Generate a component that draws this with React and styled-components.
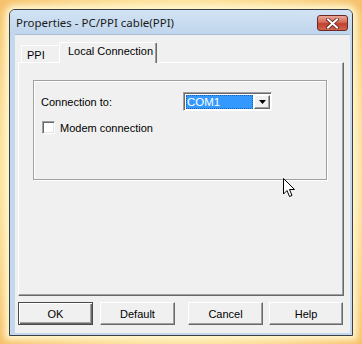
import React from "react";
import styled, { createGlobalStyle } from "styled-components";

const GlobalStyle = createGlobalStyle`
  html, body {
    margin: 0;
    padding: 0;
    width: 362px;
    height: 344px;
    overflow: hidden;
    background: radial-gradient(ellipse at 50% 50%, #fff3c4 0%, #fde4a0 68%, #f6c06a 100%);
  }
  * { box-sizing: border-box; }
`;

const Stage = styled.div`
  position: relative;
  width: 362px;
  height: 344px;
  padding: 9px 0 0 9px;
`;

const Window = styled.div`
  width: 344px;
  height: 327px;
  border: 1px solid #3a3f47;
  border-radius: 6px 6px 0 0;
  background: #c3d8ed;
  display: flex;
  flex-direction: column;
  box-shadow: 0 0 6px 4px #fff6cf;
`;

const TitleBar = styled.div`
  height: 24px;
  display: flex;
  align-items: center;
  justify-content: space-between;
  padding: 0 4px 0 6px;
  border-radius: 5px 5px 0 0;
  background: linear-gradient(#d2e3f4, #c0d6ec);
`;

const Title = styled.span`
  font-family: "Noto Sans", "DejaVu Sans", sans-serif;
  font-size: 11.5px;
  color: #1a1a1a;
  margin-top: 1px;
`;

const CloseButton = styled.div`
  width: 31px;
  height: 16px;
  border: 1px solid #6b2a22;
  border-radius: 3px;
  background: linear-gradient(#e9a79a 0%, #d46a58 45%, #c1402e 55%, #d0654f 100%);
  display: flex;
  align-items: center;
  justify-content: center;
  margin-top: 2px;
`;

const Client = styled.div`
  flex: 1;
  margin: 0 2px 2px 5px;
  background: #f0f0f0;
  border-top: 1px solid #a9bdd3;
  padding: 7px 6px 0 3px;
  display: flex;
  flex-direction: column;
`;

const TabStrip = styled.div`
  height: 20px;
  display: flex;
  align-items: flex-end;
  padding-left: 3px;
  position: relative;
  z-index: 1;
`;

const Tab = styled.div`
  font-family: "Liberation Sans", Arial, sans-serif;
  font-size: 11px;
  line-height: 13px;
  white-space: nowrap;
  color: #000;
  background: #f0f0f0;
  border-top: 1px solid #ffffff;
  border-left: 1px solid #ffffff;
  border-right: 1px solid #696969;
  box-shadow: inset -1px 0 0 #a0a0a0;
  border-radius: 2px 2px 0 0;
  height: ${({ $active }) => ($active ? "21px" : "17px")};
  margin-bottom: ${({ $active }) => ($active ? "-1px" : "0")};
  margin-left: ${({ $active }) => ($active ? "-2px" : "0")};
  padding: ${({ $active }) => ($active ? "2px 0 0 8px" : "3px 0 0 5px")};
  width: ${({ $w }) => $w}px;
`;

const Panel = styled.div`
  height: 234px;
  border-top: 1px solid #ffffff;
  border-left: 1px solid #ffffff;
  border-right: 1px solid #696969;
  border-bottom: 1px solid #696969;
  box-shadow: inset -1px -1px 0 #a0a0a0;
  padding: 17px 0 0 14px;
`;

const GroupBox = styled.div`
  width: 294px;
  height: 100px;
  border: 1px solid #a0a0a0;
  box-shadow: 1px 1px 0 #ffffff, inset 1px 1px 0 #ffffff;
  padding: 11px 0 0 7px;
  display: flex;
  flex-direction: column;
  gap: 7px;
`;

const Row = styled.div`
  display: flex;
  align-items: center;
  height: 19px;
`;

const Label = styled.span`
  font-family: "Liberation Sans", Arial, sans-serif;
  font-size: 11px;
  color: #000;
  width: ${({ $w }) => ($w ? `${$w}px` : "auto")};
`;

const Combo = styled.div`
  width: 89px;
  height: 19px;
  border-top: 1px solid #a0a0a0;
  border-left: 1px solid #a0a0a0;
  border-right: 1px solid #ffffff;
  border-bottom: 1px solid #ffffff;
  box-shadow: inset 1px 1px 0 #696969;
  background: #ffffff;
  display: flex;
  padding: 2px 1px 1px 2px;
`;

const ComboValue = styled.div`
  flex: 1;
  background: #3399ff;
  color: #ffffff;
  font-family: "Liberation Sans", Arial, sans-serif;
  font-size: 11.5px;
  line-height: 14px;
  padding-left: 1px;
  outline: 1px dotted #1f5fa8;
  outline-offset: -1px;
`;

const ComboArrow = styled.div`
  width: 16px;
  margin-left: 1px;
  background: #f0f0f0;
  border-top: 1px solid #ffffff;
  border-left: 1px solid #ffffff;
  border-right: 1px solid #696969;
  border-bottom: 1px solid #696969;
  box-shadow: inset -1px -1px 0 #a0a0a0;
  display: flex;
  align-items: center;
  justify-content: center;
`;

const CheckBox = styled.span`
  width: 13px;
  height: 13px;
  background: #ffffff;
  border-top: 1px solid #a0a0a0;
  border-left: 1px solid #a0a0a0;
  border-right: 1px solid #ffffff;
  border-bottom: 1px solid #ffffff;
  box-shadow: inset 1px 1px 0 #696969, inset -1px -1px 0 #e3e3e3;
  margin: 0 5px 0 1px;
`;

const ButtonRow = styled.div`
  display: flex;
  margin-top: 6px;
`;

const Button = styled.div`
  width: ${({ $w }) => $w}px;
  height: 23px;
  margin-right: ${({ $gap }) => $gap}px;
  background: #f0f0f0;
  border: 1px solid;
  border-color: ${({ $default }) =>
    $default ? "#4a4a4a" : "#ffffff #696969 #696969 #ffffff"};
  box-shadow: ${({ $default }) =>
    $default
      ? "inset 1px 1px 0 #ffffff, inset -1px -1px 0 #696969, inset -2px -2px 0 #a0a0a0"
      : "inset -1px -1px 0 #a0a0a0"};
  font-family: "Liberation Sans", Arial, sans-serif;
  font-size: 11px;
  color: #000;
  display: flex;
  align-items: center;
  justify-content: center;
`;

const Cursor = styled.svg`
  position: absolute;
  left: 283px;
  top: 178px;
`;

export default function App() {
  return (
    <Stage>
      <GlobalStyle />
      <Window>
        <TitleBar>
          <Title>Properties - PC/PPI cable(PPI)</Title>
          <CloseButton>
            <svg width="13" height="11" viewBox="0 0 13 11">
              <path
                d="M2 1.5 L11 9.5 M11 1.5 L2 9.5"
                stroke="#5a2019"
                strokeWidth="3.6"
                strokeLinecap="square"
              />
              <path
                d="M2 1.5 L11 9.5 M11 1.5 L2 9.5"
                stroke="#ffffff"
                strokeWidth="2"
                strokeLinecap="square"
              />
            </svg>
          </CloseButton>
        </TitleBar>
        <Client>
          <TabStrip>
            <Tab $w={40}>PPI</Tab>
            <Tab $active $w={98}>Local Connection</Tab>
          </TabStrip>
          <Panel>
            <GroupBox>
              <Row>
                <Label $w={142}>Connection to:</Label>
                <Combo>
                  <ComboValue>COM1</ComboValue>
                  <ComboArrow>
                    <svg width="7" height="4" viewBox="0 0 7 4">
                      <path d="M0 0 H7 L3.5 4 Z" fill="#000" />
                    </svg>
                  </ComboArrow>
                </Combo>
              </Row>
              <Row>
                <CheckBox />
                <Label>Modem connection</Label>
              </Row>
            </GroupBox>
          </Panel>
          <ButtonRow>
            <Button $w={75} $gap={7} $default>OK</Button>
            <Button $w={75} $gap={13}>Default</Button>
            <Button $w={75} $gap={6}>Cancel</Button>
            <Button $w={74} $gap={0}>Help</Button>
          </ButtonRow>
        </Client>
      </Window>
      <Cursor width="12" height="20" viewBox="0 0 12 20">
        <path
          d="M0.5 0.5 V16 L4 12.5 L6.5 18.5 L9 17.5 L6.5 11.5 H11.5 Z"
          fill="#ffffff"
          stroke="#000000"
          strokeWidth="1"
          strokeLinejoin="miter"
        />
      </Cursor>
    </Stage>
  );
}
